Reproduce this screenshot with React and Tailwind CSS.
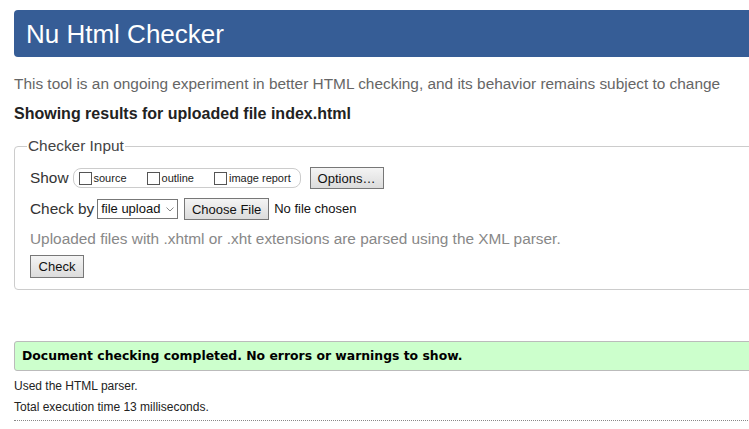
import React from 'react';

function Checkbox({ label }) {
    return (
        <label className="flex items-center gap-[2px]">
            <span className="inline-block w-[13px] h-[13px] border border-[#555] bg-white"></span>
            <span className="text-[11px] text-[#222]">{label}</span>
        </label>
    );
}

function Btn({ children, className = '' }) {
    return (
        <button className={`border border-[#777] bg-gradient-to-b from-[#f4f4f4] to-[#dcdcdc] text-[13px] text-[#111] leading-none ${className}`}>
            {children}
        </button>
    );
}

export default function App() {
    return (
        <div className="w-full h-screen overflow-hidden bg-white" style={{ fontFamily: '"Liberation Sans", Arial, sans-serif' }}>
            <div className="w-[800px] pl-[14px] pt-[10px]">
                <header className="h-[47px] bg-[#365d96] rounded-[4px] flex items-center pl-[12px]">
                    <h1 className="text-[26px] text-white leading-none">Nu Html Checker</h1>
                </header>

                <p className="mt-[18px] text-[15.4px] text-[#666] leading-[18px]">
                    This tool is an ongoing experiment in better HTML checking, and its behavior remains subject to change
                </p>
                <h2 className="mt-[12px] text-[16px] font-bold text-[#222] leading-[18px]">
                    Showing results for uploaded file index.html
                </h2>

                <fieldset className="mt-[14px] border border-[#ccc] rounded-[4px] pl-[15px] pb-[11px] pt-[12px]">
                    <legend className="ml-[-3px] px-[1px] text-[15.4px] text-[#444] leading-[18px]">Checker Input</legend>

                    <div className="flex items-center h-[22px]">
                        <span className="text-[15.4px] text-[#333] mr-[4px]">Show</span>
                        <div className="flex items-center gap-[20px] h-[20px] w-[228px] border border-[#ccc] rounded-[8px] pl-[5px]">
                            <Checkbox label="source" />
                            <Checkbox label="outline" />
                            <Checkbox label="image report" />
                        </div>
                        <Btn className="ml-[9px] w-[74px] h-[22px]">Options…</Btn>
                    </div>

                    <div className="flex items-center h-[22px] mt-[9px]">
                        <span className="text-[15.4px] text-[#333] mr-[3px]">Check by</span>
                        <div className="flex items-center justify-between h-[20px] w-[81px] border border-[#777] bg-white pl-[3px] pr-[3px]">
                            <span className="text-[13px] text-[#111]">file upload</span>
                            <svg width="8" height="5" viewBox="0 0 8 5"><path d="M0.5 0.5 L4 4 L7.5 0.5" fill="none" stroke="#888" strokeWidth="1" /></svg>
                        </div>
                        <Btn className="ml-[6px] w-[85px] h-[22px]">Choose File</Btn>
                        <span className="ml-[5px] text-[13px] text-[#111]">No file chosen</span>
                    </div>

                    <p className="mt-[10px] text-[15.4px] text-[#888] leading-[18px]">
                        Uploaded files with .xhtml or .xht extensions are parsed using the XML parser.
                    </p>

                    <Btn className="mt-[7px] w-[54px] h-[23px]">Check</Btn>
                </fieldset>

                <div className="mt-[51px] h-[30px] bg-[#ccffcc] border border-[#bbb] rounded-[3px] flex items-center pl-[7px]">
                    <span className="text-[12.4px] font-bold text-black" style={{ fontFamily: '"DejaVu Sans", Verdana, sans-serif' }}>
                        Document checking completed. No errors or warnings to show.
                    </span>
                </div>

                <p className="mt-[8px] text-[12px] text-[#222] leading-[14px]">Used the HTML parser.</p>
                <p className="mt-[7px] text-[12px] text-[#222] leading-[14px]">Total execution time 13 milliseconds.</p>
                <div className="mt-[6px] border-t border-dotted border-[#888]"></div>
            </div>
        </div>
    );
}
